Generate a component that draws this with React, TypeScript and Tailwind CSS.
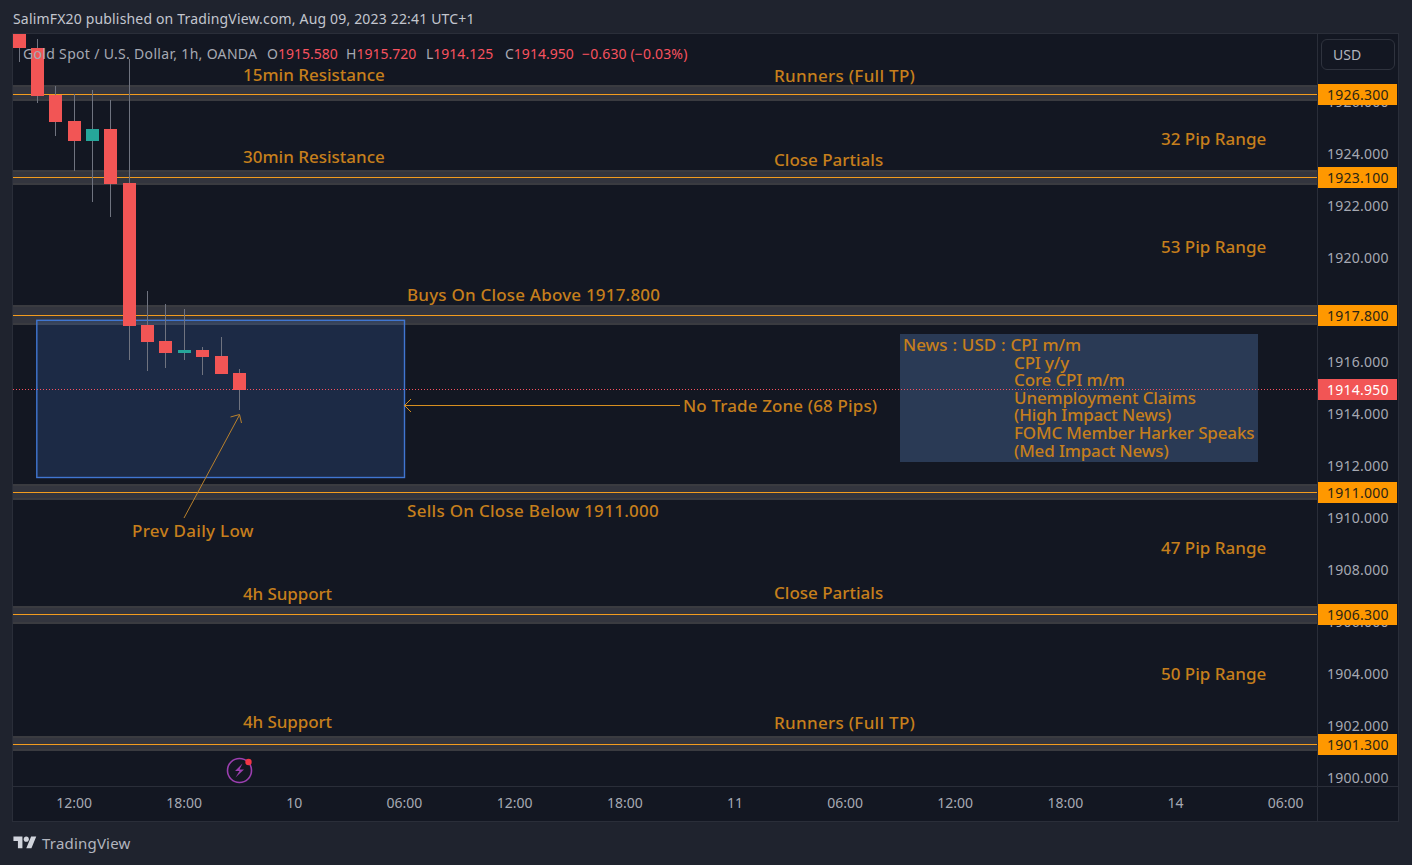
const FONT = "font-['Noto_Sans',sans-serif]";

const candles = [
  { x: 13, open: 34, close: 48, hi: 34, lo: 62, wx: 19.5, up: false },
  { x: 31, open: 48, close: 96, hi: 39, lo: 103, wx: 37.5, up: false },
  { x: 49, open: 95, close: 122, hi: 86, lo: 136, wx: 55.5, up: false },
  { x: 68, open: 121, close: 141, hi: 94, lo: 171, wx: 74.5, up: false },
  { x: 86, open: 129, close: 141, hi: 90, lo: 202, wx: 92.5, up: true },
  { x: 104, open: 129, close: 184, hi: 100, lo: 217, wx: 110.5, up: false },
  { x: 123, open: 183, close: 326, hi: 59, lo: 360, wx: 129.5, up: false },
  { x: 141, open: 325, close: 342, hi: 291, lo: 371, wx: 147.5, up: false },
  { x: 159, open: 341, close: 353, hi: 304, lo: 368, wx: 165.5, up: false },
  { x: 178, open: 350, close: 353, hi: 309, lo: 360, wx: 184.5, up: true },
  { x: 196, open: 350, close: 357, hi: 347, lo: 375, wx: 202.5, up: false },
  { x: 215, open: 356, close: 374, hi: 337, lo: 374, wx: 221.5, up: false },
  { x: 233, open: 373, close: 390, hi: 369, lo: 410, wx: 239.5, up: false },
];

// y values are page coordinates, the chart starts at x=13 y=34
const bands = [
  { top: 85, bottom: 101, line: 94.5 },
  { top: 170, bottom: 185, line: 177.5 },
  { top: 305, bottom: 325, line: 315.5 },
  { top: 484, bottom: 500, line: 492.5 },
  { top: 606, bottom: 624, line: 614.5 },
  { top: 736, bottom: 751, line: 744.5 },
];

const labels = [
  { x: 243, y: 75, text: "15min Resistance", fit: "" },
  { x: 774, y: 76, text: "Runners (Full TP)", fit: "tracking-[0.3px]" },
  { x: 1161, y: 139, text: "32 Pip Range", fit: "" },
  { x: 243, y: 157, text: "30min Resistance", fit: "" },
  { x: 774, y: 160, text: "Close Partials", fit: "" },
  { x: 1161, y: 247, text: "53 Pip Range", fit: "" },
  { x: 407, y: 295, text: "Buys On Close Above 1917.800", fit: "tracking-[0.2px]" },
  { x: 683, y: 406, text: "No Trade Zone (68 Pips)", fit: "tracking-[0.13px]" },
  { x: 407, y: 511, text: "Sells On Close Below 1911.000", fit: "tracking-[0.28px]" },
  { x: 132, y: 531, text: "Prev Daily Low", fit: "tracking-[0.3px]" },
  { x: 1161, y: 548, text: "47 Pip Range", fit: "" },
  { x: 243, y: 594, text: "4h Support", fit: "tracking-[-0.1px]" },
  { x: 774, y: 593, text: "Close Partials", fit: "" },
  { x: 1161, y: 674, text: "50 Pip Range", fit: "" },
  { x: 243, y: 722, text: "4h Support", fit: "tracking-[-0.1px]" },
  { x: 774, y: 723, text: "Runners (Full TP)", fit: "tracking-[0.3px]" },
];

const ticks = ["1926.000", "1924.000", "1922.000", "1920.000", "1918.000", "1916.000", "1914.000", "1912.000", "1910.000", "1908.000", "1906.000", "1904.000", "1902.000", "1900.000"];

const priceTags = [
  { y: 84, text: "1926.300" },
  { y: 167, text: "1923.100" },
  { y: 305, text: "1917.800" },
  { y: 482, text: "1911.000" },
  { y: 604, text: "1906.300" },
  { y: 734, text: "1901.300" },
];

const times = ["12:00", "18:00", "10", "06:00", "12:00", "18:00", "11", "06:00", "12:00", "18:00", "14", "06:00"];

const newsLines = ["CPI y/y", "Core CPI m/m", "Unemployment Claims", "(High Impact News)", "FOMC Member Harker Speaks", "(Med Impact News)"];

function ChartDrawing() {
  return (
    <svg className="absolute left-0 top-0" width="1304" height="752" viewBox="13 34 1304 752">
      {bands.map((b) => (
        <g key={b.top}>
          <rect x="13" y={b.top} width="1304" height={b.bottom - b.top} fill="#33353e" />
          <rect x="13" y={b.top} width="1304" height="2" fill="#3a3b40" />
          <rect x="13" y={b.bottom - 2} width="1304" height="2" fill="#3a3b40" />
          <line x1="13" x2="1317" y1={b.line} y2={b.line} stroke="#f39c1e" />
        </g>
      ))}
      <rect x="36.8" y="320.3" width="367.7" height="157.2" fill="#4076d1" fillOpacity="0.2" stroke="#4076d1" strokeWidth="1.4" />
      {candles.map((c) => (
        <g key={c.x}>
          <line x1={c.wx} x2={c.wx} y1={c.hi} y2={c.lo} stroke="#6f737f" />
          <rect x={c.x} y={c.open} width="13" height={c.close - c.open} fill={c.up ? "#26a69a" : "#f25555"} />
        </g>
      ))}
      <line x1="13" x2="1317" y1="389.5" y2="389.5" stroke="#f7525f" strokeDasharray="1 2" />
      {/* No trade zone arrow */}
      <path d="M680 405.5H404M411 399L404.5 405.5L411 412" fill="none" stroke="#d68f20" />
      {/* Prev daily low arrow */}
      <path d="M184 518L239.5 415M230.5 417L239.5 414.5L241.5 423" fill="none" stroke="#b9812c" />
    </svg>
  );
}

function EventIcon() {
  return (
    <svg className="absolute left-[212px] top-[721px]" width="30" height="30" viewBox="0 0 30 30">
      <circle cx="14.5" cy="15.5" r="12" fill="none" stroke="#9c3fb0" strokeWidth="1.6" />
      <path d="M17.5 8.5L10 16h4.5L10.5 22.5 19 14.5h-4.5z" fill="#9c3fb0" />
      <circle cx="23.5" cy="7" r="3.2" fill="#f23645" />
    </svg>
  );
}

function Legend() {
  return (
    <div className="absolute left-[10px] top-[11px] flex items-center text-[14px] leading-[18px] text-[#a6a9b3] whitespace-nowrap">
      <span className="w-[244px] tracking-[0.32px]">Gold Spot / U.S. Dollar, 1h, OANDA</span>
      <span className="w-[79px]">O<span className="text-[#f7525f]">1915.580</span></span>
      <span className="w-[80px]">H<span className="text-[#f7525f]">1915.720</span></span>
      <span className="w-[79px]">L<span className="text-[#f7525f]">1914.125</span></span>
      <span className="w-[77px]">C<span className="text-[#f7525f]">1914.950</span></span>
      <span className="text-[#f7525f] tracking-[0.15px]">−0.630 (−0.03%)</span>
    </div>
  );
}

function NewsBox() {
  return (
    <div className="absolute left-[887px] top-[300px] w-[358px] h-[128px] bg-[#2a3a55] pl-[3px] pt-[2px] text-[17px] font-medium leading-[17.6px] text-[#c67f1c] whitespace-nowrap">
      <div className="[word-spacing:0.4px]">News : USD : CPI m/m</div>
      {newsLines.map((line) => (
        <div key={line} className="pl-[111px] tracking-[-0.15px]">{line}</div>
      ))}
    </div>
  );
}

function PriceAxis() {
  return (
    <div className="relative w-[81px] border-l border-[#2a2e39] text-[14px] tracking-[0.25px] text-[#a6a9b3]">
      <div className="flex flex-col pt-[41px] pl-[9px]">
        {ticks.map((t) => (
          <div key={t} className="h-[52px] flex items-center">{t}</div>
        ))}
      </div>
      {priceTags.map((tag) => (
        <div
          key={tag.y}
          className="absolute left-0 w-[79px] h-[21px] pl-[9px] flex items-center bg-[#ff9800] text-[#2a2416]"
          style={{ top: tag.y - 34 }}
        >
          {tag.text}
        </div>
      ))}
      <div className="absolute left-0 top-[345px] w-[79px] h-[21px] pl-[9px] flex items-center bg-[#f25555] text-white">
        1914.950
      </div>
    </div>
  );
}

export default function App() {
  return (
    <div className={`w-[1412px] h-[865px] bg-[#1f232e] flex flex-col overflow-hidden ${FONT}`}>
      <div className="h-[33px] pl-[13px] pt-[10px] text-[14px] leading-[18px] tracking-[0.17px] text-[#c3c6ce] whitespace-nowrap">
        SalimFX20 published on TradingView.com, Aug 09, 2023 22:41 UTC+1
      </div>

      <div className="ml-[12px] w-[1387px] h-[789px] border border-[#2a2e39] bg-[#131722] flex flex-col">
        <div className="flex h-[752px]">
          <div className="relative w-[1304px] overflow-hidden">
            <NewsBox />
            <ChartDrawing />
            <Legend />
            {labels.map((l) => (
              <div
                key={l.text + l.y}
                className={`absolute -translate-y-1/2 text-[17px] font-medium leading-[22px] text-[#c67f1c] whitespace-nowrap ${l.fit}`}
                style={{ left: l.x - 13, top: l.y - 34 }}
              >
                {l.text}
              </div>
            ))}
            <EventIcon />
          </div>
          <div className="relative flex">
            <PriceAxis />
            {/* currency button sits over the top of the scale */}
            <div className="absolute left-[4px] top-[5px] w-[74px] h-[31px] rounded-[6px] border border-[#2f333e] bg-[#131722] pl-[11px] flex items-center text-[14px] text-[#b2b5be]">
              USD
            </div>
          </div>
        </div>
        <div className="flex flex-1 border-t border-[#2a2e39]">
          <div className="w-[1304px] flex items-center pl-[6px] pb-[3px] text-[14px] text-[#a6a9b3] overflow-hidden">
            {times.map((t, i) => (
              <div key={i} className="w-[110.15px] shrink-0 text-center">{t}</div>
            ))}
          </div>
          <div className="flex-1 border-l border-[#2a2e39]" />
        </div>
      </div>

      <div className="flex items-center gap-[5px] pl-[13px] pt-[11px] text-[#b2b5be]">
        <svg width="24" height="18" viewBox="0 0 36 28">
          <path d="M14 22H7V11H0V4h14v18zM28 22h-8l7.5-18h8L28 22z" fill="#d1d4dc" />
          <circle cx="20" cy="8" r="4" fill="#d1d4dc" />
        </svg>
        <span className="text-[15px] leading-[20px] tracking-[0.2px]">TradingView</span>
      </div>
    </div>
  );
}
